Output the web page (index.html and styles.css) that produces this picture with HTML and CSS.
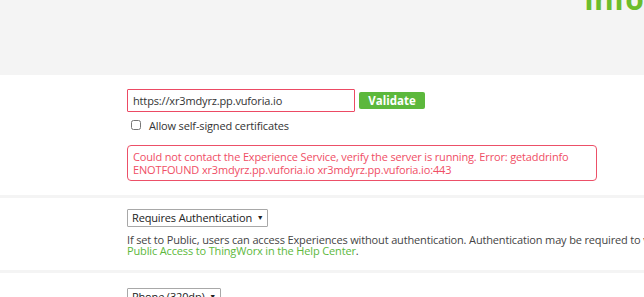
FILE: index.html
```html
<!DOCTYPE html>
<html lang="en">
<head>
    <meta charset="UTF-8">
    <meta name="viewport" content="width=device-width, initial-scale=1.0">
    <title>Experience Service Settings</title>
    <link rel="stylesheet" href="styles.css">
</head>
<body>
    <div class="banner">
        <h1 class="title">Info</h1>
    </div>

    <div class="setting">
        <div class="url-line">
            <input type="text" class="url-input" value="https://xr3mdyrz.pp.vuforia.io">
            <button class="validate-btn">Validate</button>
        </div>
        <label class="check-line">
            <input type="checkbox" class="check-box">
            <span>Allow self-signed certificates</span>
        </label>
        <div class="error-box">
            Could not contact the Experience Service, verify the server is running. Error: getaddrinfo<br>
            ENOTFOUND xr3mdyrz.pp.vuforia.io xr3mdyrz.pp.vuforia.io:443
        </div>
    </div>

    <div class="setting access">
        <div class="select-box">Requires Authentication <span class="caret">&#9660;</span></div>
        <p class="help">
            If set to Public, users can access Experiences without authentication. Authentication may be required to view some content. See<br>
            <a href="#" class="help-link">Public Access to ThingWorx in the Help Center</a>.
        </p>
    </div>

    <div class="setting device">
        <div class="select-box">Phone (320dp) <span class="caret">&#9660;</span></div>
    </div>
</body>
</html>
```

FILE: styles.css
```css
html, body {
    margin: 0;
    overflow: hidden;
}
body {
    background: #ffffff;
    font-family: "Open Sans", "Noto Sans", Arial, sans-serif;
    font-size: 11px;
    letter-spacing: -0.15px;
    color: #333333;
    width: 644px;
    height: 297px;
}
.banner {
    height: 75px;
    background: #f4f4f4;
    overflow: hidden;
}
.title {
    margin: -16px 0 0 584px;
    font-size: 30px;
    line-height: 30px;
    font-weight: 700;
    letter-spacing: 0;
    color: #6cbd2c;
    white-space: nowrap;
}
.setting {
    padding: 0 0 0 127px;
    border-bottom: 3px solid #f4f4f4;
    white-space: nowrap;
}
.url-line {
    display: flex;
    align-items: center;
    padding-top: 14px;
}
.url-input {
    box-sizing: border-box;
    width: 228px;
    height: 23px;
    padding: 0 5px;
    border: 1px solid #ec4a64;
    border-radius: 1px;
    font-family: inherit;
    font-size: 11px;
    letter-spacing: -0.15px;
    color: #333333;
    outline: none;
}
.validate-btn {
    margin-left: 4px;
    width: 66px;
    height: 17px;
    padding: 0;
    background: #5cb83c;
    color: white;
    font-family: inherit;
    font-size: 11.5px;
    font-weight: 700;
    border: none;
    border-radius: 2px;
    line-height: 17px;
}
.check-line {
    display: flex;
    align-items: center;
    margin-top: 6px;
    height: 14px;
}
.check-box {
    margin: 0 8px 0 4px;
    width: 10px;
    height: 10px;
}
.error-box {
    box-sizing: border-box;
    width: 470px;
    margin-top: 13px;
    margin-bottom: 14px;
    padding: 4px 5px;
    border: 1px solid #ec5068;
    border-radius: 4px;
    color: #f04e65;
    line-height: 13px;
    overflow: hidden;
}
.access {
    padding-top: 11px;
    padding-bottom: 14px;
}
.select-box {
    display: inline-block;
    box-sizing: border-box;
    height: 18px;
    padding: 0 4px;
    border: 1px solid #a8a8a8;
    border-radius: 1px;
    line-height: 16px;
    color: #222222;
}
.caret {
    font-size: 7px;
    vertical-align: 2px;
    margin-left: 2px;
}
.help {
    margin: 7px 0 0;
    line-height: 11px;
    color: #444444;
}
.help-link {
    color: #5cb83c;
    text-decoration: none;
}
.device {
    padding-top: 15px;
    border-bottom: none;
}
```
